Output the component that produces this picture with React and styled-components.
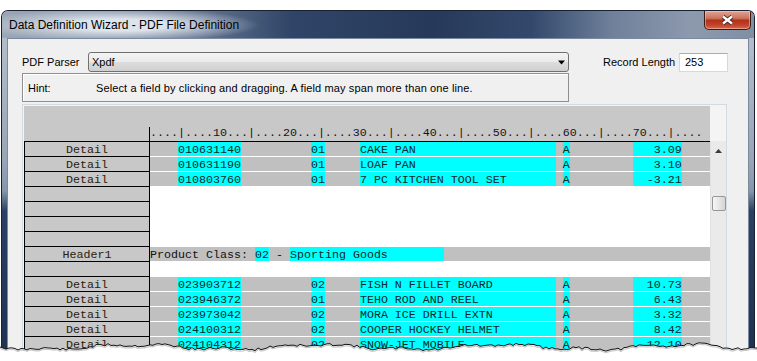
import styled, { createGlobalStyle } from "styled-components"

const GlobalStyle = createGlobalStyle`
    html, body {
        margin: 0;
        padding: 0;
        background: #fff;
        overflow: hidden;
    }
`

const CH = 7
const MONO = `"Liberation Mono", "Courier New", monospace`
const UI = `"Liberation Sans", Tahoma, Arial, sans-serif`

const Page = styled.div`
    position: relative;
    width: 757px;
    height: 361px;
    padding: 10px 0 0 1px;
    box-sizing: border-box;
    overflow: hidden;
    font-family: ${UI};
`

const Window = styled.div`
    width: 754px;
    height: 370px;
    box-sizing: border-box;
    border: 1px solid #1a2231;
    border-bottom: none;
    border-radius: 7px 7px 0 0;
    overflow: hidden;
    display: flex;
    flex-direction: column;
    background: linear-gradient(180deg, #b9c3cf 0px, #98a5b6 150px, #8696ab 180px, #2b4163 200px, #1e304f 360px);
`

const TitleBar = styled.div`
    height: 27px;
    flex-shrink: 0;
    display: flex;
    align-items: flex-start;
    background:
        radial-gradient(ellipse 140px 17px at 118px 14px, rgba(226, 232, 239, 0.95) 35%, rgba(226, 232, 239, 0) 100%),
        linear-gradient(90deg, #9ba7b7 0px, #8f9cae 60px, #62738f 200px, #2f4567 290px, #27395a 430px, #33496c 530px, #6f809a 610px, #8d9aae 690px, #7f8ea3 754px);
`

const Title = styled.div`
    padding-left: 7px;
    line-height: 28px;
    font-size: 12px;
    color: #000;
`

const CloseButton = styled.div`
    margin-left: auto;
    margin-right: 3px;
    width: 47px;
    height: 19px;
    box-sizing: border-box;
    border: 1px solid #3a1b17;
    border-top: none;
    border-radius: 0 0 5px 5px;
    display: flex;
    align-items: center;
    justify-content: center;
    background: linear-gradient(180deg, #dca596 0%, #cf735f 40%, #b3321c 52%, #c0432b 78%, #dd6a45 100%);
    box-shadow: inset 0 0 0 1px rgba(255, 220, 210, 0.45);
`

const Client = styled.div`
    flex: 1;
    margin: 0 5px;
    border: 1px solid #7c8aa0;
    border-bottom: none;
    background: #f0f0f0;
    padding: 13px 0 0 14px;
    font-size: 11px;
    color: #000;
`

const TopRow = styled.div`
    display: flex;
    align-items: center;
    height: 20px;
`

const Label = styled.div`
    width: ${p => p.$w}px;
    margin-left: ${p => p.$ml || 0}px;
    flex-shrink: 0;
`

const Select = styled.div`
    width: 481px;
    height: 20px;
    box-sizing: border-box;
    border: 1px solid #707070;
    border-radius: 3px;
    background: linear-gradient(180deg, #f3f3f3 0%, #ebebeb 48%, #dddddd 52%, #cfcfcf 100%);
    display: flex;
    align-items: center;
    justify-content: space-between;
    padding: 0 2px 0 3px;
`

const TextBox = styled.div`
    width: 49px;
    height: 19px;
    box-sizing: border-box;
    border: 1px solid #d5d9de;
    border-top-color: #abadb3;
    background: #fff;
    padding-left: 5px;
    line-height: 17px;
`

const HintBox = styled.div`
    margin-top: 1px;
    width: 547px;
    height: 29px;
    box-sizing: border-box;
    border: 1px solid #8f8f8f;
    box-shadow: inset 1px 1px 0 #fff;
    display: flex;
    align-items: center;
    padding-left: 5px;
`

const HintText = styled.span`
    letter-spacing: 0.12px;
`

const Panel = styled.div`
    margin-top: 2px;
    width: 705px;
    height: 300px;
    box-sizing: border-box;
    border: 1px solid #d3dbe2;
    padding: 1px 0 0 1px;
    background: #f4f4f4;
`

const Header = styled.div`
    width: 686px;
    height: 35px;
    background: #c8c8c8;
    display: flex;
    align-items: flex-end;
`

const Ruler = styled.div`
    margin-left: 125px;
    width: 561px;
    height: 14px;
    box-sizing: border-box;
    border-left: 1px solid #000;
    font-family: ${MONO};
    font-size: 11.667px;
    line-height: 12px;
    white-space: pre;
    color: #1a1020;
`

const Body = styled.div`
    display: flex;
`

const Rows = styled.div`
    width: 686px;
    border-top: 1px solid #000;
    font-family: ${MONO};
    font-size: 11.667px;
    line-height: 16px;
    color: #111;
`

const Row = styled.div`
    display: flex;
    height: 15px;
`

const LabelCell = styled.div`
    width: 126px;
    box-sizing: border-box;
    border: 1px solid #000;
    border-top: none;
    background: #c8c8c8;
    text-align: center;
    color: #2a1c0c;
    overflow: hidden;
`

const DataCell = styled.div`
    width: ${80 * CH}px;
    height: 14px;
    border-bottom: 1px solid #fff;
    background: ${p => (p.$filled ? "#c0c0c0" : "#fff")};
    white-space: pre;
    overflow: hidden;
`

const Seg = styled.span`
    background: ${p => (p.$hl ? "#00ffff" : "transparent")};
    color: ${p => (p.$hl ? "#0a2a2a" : "#111")};
    display: inline-block;
    height: 14px;
    vertical-align: top;
`

const Scrollbar = styled.div`
    width: 16px;
    box-sizing: border-box;
    background: #eaeaea;
    border-left: 1px solid #e2e2e2;
    display: flex;
    flex-direction: column;
    align-items: center;
`

const ArrowBox = styled.div`
    height: 19px;
    display: flex;
    align-items: center;
    justify-content: center;
`

const Thumb = styled.div`
    margin-top: 36px;
    width: 14px;
    height: 15px;
    box-sizing: border-box;
    border: 1px solid #979797;
    border-radius: 2px;
    background: linear-gradient(90deg, #f6f6f6 0%, #e6e6e6 50%, #d4d4d4 100%);
`

const Torn = styled.svg`
    position: absolute;
    left: 0;
    bottom: 0;
    display: block;
`

const ruler = "....|" + [10, 20, 30, 40, 50, 60, 70].map(n => `....${n}...|`).join("") + "...."

const detail = (id, cls, desc, amt) => ({
    label: "Detail",
    segs: [
        ["    ", false],
        [id, true],
        [" ".repeat(10), false],
        [cls, true],
        ["     ", false],
        [desc.padEnd(28), true],
        [" ", false],
        ["A", true],
        [" ".repeat(9), false],
        [amt.padStart(7), true],
    ],
})

const blank = { label: "", segs: null }

const rows = [
    detail("010631140", "01", "CAKE PAN", "3.09"),
    detail("010631190", "01", "LOAF PAN", "3.10"),
    detail("010803760", "01", "7 PC KITCHEN TOOL SET", "-3.21"),
    blank,
    blank,
    blank,
    blank,
    {
        label: "Header1",
        segs: [
            ["Product Class: ", false],
            ["02", true],
            [" - ", false],
            ["Sporting Goods".padEnd(22), true],
        ],
    },
    blank,
    detail("023903712", "02", "FISH N FILLET BOARD", "10.73"),
    detail("023946372", "01", "TEHO ROD AND REEL", "6.43"),
    detail("023973042", "02", "MORA ICE DRILL EXTN", "3.32"),
    detail("024100312", "02", "COOPER HOCKEY HELMET", "8.42"),
    detail("024104312", "02", "SNOW-JET MOBILE", "12.10"),
    detail("024104390", "02", "SNOW SHOVEL", "9.95"),
]

// jagged "torn paper" edge across the bottom of the shot
const tornPath = (() => {
    let s = 11
    const rnd = () => (s = (s * 9301 + 49297) % 233280) / 233280
    let d = "M0 10"
    for (let x = 3; x <= 760; x += 3) {
        const y = 10 + Math.sin(x / 29) * 2.2 + Math.sin(x / 9.5) * 1.1 + (rnd() - 0.5) * 2.6
        d += ` L${x} ${y.toFixed(1)}`
    }
    return d
})()

const App = () => {
    return (
        <Page>
            <GlobalStyle />
            <Window>
                <TitleBar>
                    <Title>Data Definition Wizard - PDF File Definition</Title>
                    <CloseButton>
                        <svg width="13" height="10" viewBox="0 0 13 10">
                            <path d="M2 1.5 L11 8.5 M11 1.5 L2 8.5" stroke="#4b2621" strokeWidth="4.2" />
                            <path d="M2 1.5 L11 8.5 M11 1.5 L2 8.5" stroke="#fff" strokeWidth="2.3" />
                        </svg>
                    </CloseButton>
                </TitleBar>
                <Client>
                    <TopRow>
                        <Label $w={66}>PDF Parser</Label>
                        <Select>
                            <span>Xpdf</span>
                            <svg width="9" height="5" viewBox="0 0 9 5">
                                <path d="M1 0.5 L8 0.5 L4.5 4.5 Z" fill="#000" />
                            </svg>
                        </Select>
                        <Label $w={76} $ml={34}>Record Length</Label>
                        <TextBox>253</TextBox>
                    </TopRow>
                    <HintBox>
                        <Label $w={68}>Hint:</Label>
                        <HintText>Select a field by clicking and dragging. A field may span more than one line.</HintText>
                    </HintBox>
                    <Panel>
                        <Header>
                            <Ruler>{ruler}</Ruler>
                        </Header>
                        <Body>
                            <Rows>
                                {rows.map((r, i) => (
                                    <Row key={i}>
                                        <LabelCell>{r.label}</LabelCell>
                                        <DataCell $filled={!!r.segs}>
                                            {r.segs &&
                                                r.segs.map(([t, hl], j) => (
                                                    <Seg key={j} $hl={hl}>{t}</Seg>
                                                ))}
                                        </DataCell>
                                    </Row>
                                ))}
                            </Rows>
                            <Scrollbar>
                                <ArrowBox>
                                    <svg width="7" height="4" viewBox="0 0 7 4">
                                        <path d="M0 4 L3.5 0 L7 4 Z" fill="#3c3c3c" />
                                    </svg>
                                </ArrowBox>
                                <Thumb />
                            </Scrollbar>
                        </Body>
                    </Panel>
                </Client>
            </Window>
            <Torn width="757" height="24" viewBox="0 0 757 24">
                <path d={tornPath + " L760 24 L0 24 Z"} fill="#fff" />
                <path d={tornPath} fill="none" stroke="#c8c8c8" strokeWidth="1.2" transform="translate(0 1.5)" />
                <path d={tornPath} fill="none" stroke="#111" strokeWidth="1" />
            </Torn>
        </Page>
    )
}

export default App
